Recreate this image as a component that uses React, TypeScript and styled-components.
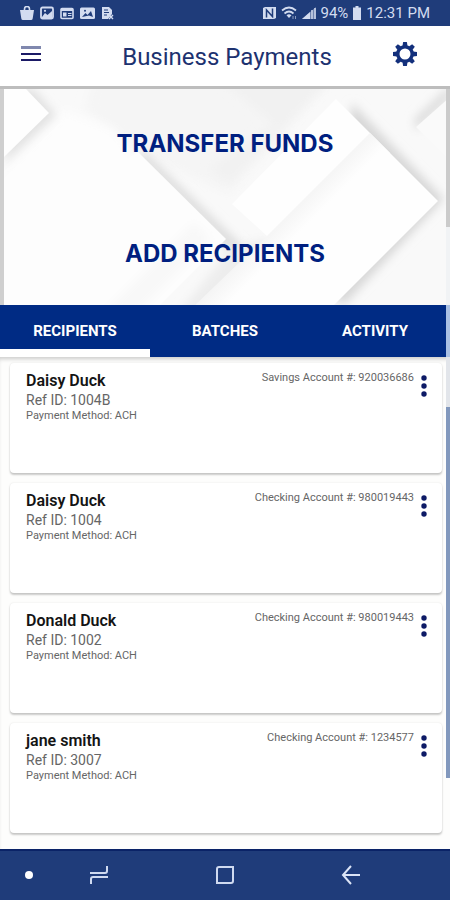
import React, { useState } from "react";
import styled, { createGlobalStyle } from "styled-components";

const GlobalStyle = createGlobalStyle`
  * { box-sizing: border-box; }
  body {
    margin: 0;
    background: #fdfdfc;
    font-family: Roboto, "Liberation Sans", sans-serif;
  }
  button {
    font: inherit;
    color: inherit;
    background: none;
    border: 0;
    padding: 0;
    cursor: pointer;
  }
  h1, h2, p { margin: 0; }
  svg { display: block; }
`;

const Screen = styled.div`
  display: flex;
  flex-direction: column;
  min-height: 100vh;
`;

const StatusBar = styled.div`
  display: flex;
  align-items: center;
  justify-content: space-between;
  height: 26px;
  padding: 0 20px;
  background: #1f3c7a;
  color: #d3dcf0;
  font-size: 15px;
  line-height: 26px;
`;

const StatusGroup = styled.div<{ $gap: number }>`
  display: flex;
  align-items: center;
  gap: ${(p) => p.$gap}px;
`;

const Header = styled.header`
  display: grid;
  grid-template-columns: 26px 1fr 26px;
  align-items: center;
  height: 63px;
  padding: 0 32px 4px 20px;
  background: #fff;
  border-bottom: 3px solid #bdbdbd;
`;

const Title = styled.h1`
  padding: 6px 0 0 16px;
  text-align: center;
  font-size: 24px;
  line-height: 32px;
  font-weight: 400;
  color: #1d3270;
`;

const IconButton = styled.button`
  display: grid;
  place-items: center;
  justify-self: center;
  flex: none;
`;

const MainMenuButton = styled(IconButton)`
  justify-self: start;
`;

const Body = styled.div`
  position: relative;
  flex: 1;
`;

const Rail = styled.div`
  position: absolute;
  top: 0;
  right: 0;
  bottom: 0;
  display: flex;
  flex-direction: column;
  width: 4px;
`;

const RailPart = styled.div<{ $grow: number; $color: string }>`
  flex: ${(p) => p.$grow} 0 0;
  background: ${(p) => p.$color};
`;

const Hero = styled.section`
  display: grid;
  border-left: 4px solid #cfcfcf;
  background: #fafafa;
  overflow: hidden;
`;

const HeroArt = styled.svg`
  grid-area: 1 / 1;
  width: 100%;
  height: 100%;
`;

const HeroActions = styled.div`
  grid-area: 1 / 1;
  z-index: 1;
  display: flex;
  flex-direction: column;
  align-items: center;
  gap: 78px;
  padding: 39px 4px 35px 0;
`;

const HeroButton = styled.button`
  font-family: Inter, Roboto, sans-serif;
  font-size: 24px;
  line-height: 32px;
  font-weight: 700;
  color: #001f80;
`;

const Tabs = styled.div`
  display: grid;
  grid-template-columns: repeat(3, 1fr);
  background: #002b84;
`;

const Tab = styled.button<{ $active: boolean }>`
  height: 52px;
  box-shadow: inset 0 ${(p) => (p.$active ? "-8px" : "0")} 0 #fff;
  font-size: 15px;
  line-height: 52px;
  font-weight: 700;
  color: #fff;
`;

const List = styled.ul`
  display: flex;
  flex-direction: column;
  gap: 10px;
  margin: 0;
  padding: 6px 8px 16px 10px;
  list-style: none;
  box-shadow: inset 0 4px 4px -2px rgba(0, 0, 0, 0.2);
`;

const Card = styled.li`
  display: flex;
  justify-content: space-between;
  min-height: 110px;
  padding: 8px 15px 8px 16px;
  background: #fff;
  border-radius: 4px;
  box-shadow: 0 2px 2px rgba(0, 0, 0, 0.2), 0 0 2px rgba(0, 0, 0, 0.1);
`;

const Name = styled.h2`
  font-size: 16px;
  line-height: 20px;
  font-weight: 600;
  color: #141414;
`;

const RefId = styled.p`
  font-size: 14px;
  line-height: 18px;
  color: #666;
`;

const Small = styled.p`
  font-size: 11px;
  line-height: 14px;
  color: #666;
`;

const CardSide = styled.div`
  display: flex;
  align-items: flex-start;
  gap: 7px;
`;

const MenuButton = styled(IconButton)`
  width: 6px;
  height: 22px;
  margin-top: 4px;
`;

const NavBar = styled.nav`
  display: grid;
  grid-template-columns: 36px 1fr 1fr 1fr 36px;
  align-items: center;
  height: 51px;
  padding-bottom: 2px;
  background: #1f3c7a;
  border-top: 2px solid #0a2367;
`;

const NavDot = styled(IconButton)`
  justify-self: end;
  margin-right: 2px;
`;

const recipients = [
  { name: "Daisy Duck", ref: "1004B", account: "Savings Account #: 920036686" },
  { name: "Daisy Duck", ref: "1004", account: "Checking Account #: 980019443" },
  { name: "Donald Duck", ref: "1002", account: "Checking Account #: 980019443" },
  { name: "jane smith", ref: "3007", account: "Checking Account #: 1234577" },
];

const tabNames = ["RECIPIENTS", "BATCHES", "ACTIVITY"];

const light = "#d3dcf0";
const bar = "#1f3c7a";

function NoticeIcons() {
  return (
    <StatusGroup $gap={6}>
      <svg width="14" height="14" viewBox="0 0 14 14">
        <path d="M0 4h14l-1.300 8.500q-.2 1.500-1.700 1.500H3q-1.500 0-1.700-1.500z" fill={light} />
        <path d="M4.500 5V3a2.500 2.500 0 0 1 5 0v2" fill="none" stroke={light} strokeWidth="1.600" />
      </svg>
      <svg width="14" height="14" viewBox="0 0 14 14">
        <rect x="1" y="1.500" width="12" height="11" rx="1.500" fill="none" stroke={light} strokeWidth="1.800" />
        <path d="M2 11l3-4 2.500 2L12 5v7H2z" fill={light} />
        <circle cx="5" cy="4.800" r="1.100" fill={light} />
      </svg>
      <svg width="14" height="14" viewBox="0 0 14 14">
        <rect x="1" y="2.500" width="12" height="10" rx="1" fill="none" stroke={light} strokeWidth="1.600" />
        <path d="M1 2h12v3H1zM3 6.500h3.500v4H3z" fill={light} />
        <path d="M8 7.500h3.500M8 9.500h3.500" stroke={light} />
      </svg>
      <svg width="15" height="14" viewBox="0 0 15 14">
        <rect x="0" y="1.500" width="15" height="11.500" rx="1.500" fill={light} />
        <path d="M2 11l3.500-4 2 2L11 5l2 6-4-1.500z" fill={bar} />
        <circle cx="5" cy="4.800" r="1" fill={bar} />
      </svg>
      <svg width="13" height="14" viewBox="0 0 13 14">
        <path d="M1 1h7l3 3v4L7 13H1z" fill={light} />
        <path d="M3 4h4M3 6.500h5M3 9h3" stroke={bar} />
        <path d="M8 9l4 4M12 9l-4 4" stroke={light} strokeWidth="1.400" />
      </svg>
    </StatusGroup>
  );
}

function SystemIcons() {
  return (
    <StatusGroup $gap={5}>
      <svg width="13" height="14" viewBox="0 0 13 14">
        <path d="M0 2l2-1h11v11l-2 1H0z" fill={light} />
        <path d="M3.500 11.500V4l6 6.500V2.500" fill="none" stroke={bar} strokeWidth="1.500" />
      </svg>
      <svg width="16" height="14" viewBox="0 0 16 14">
        <g fill="none" stroke={light} strokeWidth="1.700">
          <path d="M1 4.500q7-6 14 0" />
          <path d="M3.500 7.500q4.500-4 9 0" />
        </g>
        <path d="M5.500 9.300q2.500-2 5 0L8 12z" fill={light} />
        <path d="M12 10v3M14.500 10v3" stroke={light} strokeWidth="1" opacity=".6" />
      </svg>
      <svg width="14" height="14" viewBox="0 0 14 14">
        <path d="M0 13L14 1v12z" fill={light} opacity=".45" />
        <path d="M0 13l8-7v7z" fill={light} />
        <path d="M10 4v9M13 2v11" stroke={light} strokeWidth="1.400" />
      </svg>
      <span>94%</span>
      <svg width="8" height="14" viewBox="0 0 8 14">
        <path d="M2.500 0h3v1.500H8V14H0V1.500h2.500z" fill={light} />
      </svg>
      <span>12:31 PM</span>
    </StatusGroup>
  );
}

function Gear() {
  const teeth = [0, 45, 90, 135, 180, 225, 270, 315];
  return (
    <svg width="26" height="26" viewBox="-13 -13 26 26">
      <circle r="7.200" fill="none" stroke="#13307c" strokeWidth="3.400" />
      {teeth.map((a) => (
        <path key={a} d="M-2.500-8L-1.900-12h3.800L2.500-8z" fill="#13307c" transform={`rotate(${a})`} />
      ))}
    </svg>
  );
}

function Backdrop() {
  const soft = "url(#soft)";
  return (
    <HeroArt viewBox="0 0 446 216" preserveAspectRatio="none" aria-hidden="true">
      <defs>
        <filter id="soft" filterUnits="userSpaceOnUse" x="-80" y="-80" width="620" height="400">
          <feGaussianBlur stdDeviation="5" />
        </filter>
        <linearGradient id="fold" gradientUnits="userSpaceOnUse" x1="310" y1="99" x2="325" y2="114">
          <stop offset="0" stopColor="#f5f5f5" />
          <stop offset="1" stopColor="#fefefe" />
        </linearGradient>
      </defs>
      <rect width="446" height="216" fill="#f9f9f9" />
      <path d="M90 -10H330L225 105 133 62 80 20z" fill="#f5f5f5" filter={soft} />
      <path d="M215 -10H325L225 95 205 80 270 35z" fill="#f1f1f1" filter={soft} />
      <path d="M140 62L240 158 228 165 130 72z" fill="#dedede" filter={soft} />
      <path d="M-40 120L60 20 110 40 133 70 212 150 156 206 70 300-60 260z" fill="#fdfdfd" filter={soft} />
      <path d="M133 62L222 150 156 216H60L100 95z" fill="#fdfdfd" />
      <path d="M98 226L190 134 206 150 130 226z" fill="#f8f8f8" filter={soft} />
      <path d="M228 158L176 222H310L262 150z" fill="#ededed" filter={soft} />
      <path d="M0 74L52 26 30 0 10 0z" fill="#e2e2e2" filter={soft} />
      <path d="M0 0h22l23 24L0 68z" fill="#fefefe" />
      <path d="M348 14L440 110 340 216 326 206z" fill="#d8d8d8" filter={soft} />
      <path d="M332 10L434 112 330 216H210L263 147 228 115z" fill="#fefefe" />
      <path d="M366 44L386 64 229 221H186L263 147z" fill="url(#fold)" />
      <path d="M410 30L446 -4V10L412 42z" fill="#dedede" filter={soft} />
      <path d="M412 38L446 8V72z" fill="#fafafa" />
    </HeroArt>
  );
}

export default function App() {
  const [tab, setTab] = useState(0);
  return (
    <>
      <GlobalStyle />
      <Screen>
        <StatusBar>
          <NoticeIcons />
          <SystemIcons />
        </StatusBar>
        <Header>
          <MainMenuButton aria-label="Menu">
            <svg width="22" height="16" viewBox="0 0 22 16">
              <path d="M1 1.500h20" stroke="#8088ae" strokeWidth="3" />
              <path d="M1 8h20M1 14h20" stroke="#1b1a66" strokeWidth="2" />
            </svg>
          </MainMenuButton>
          <Title>Business Payments</Title>
          <IconButton aria-label="Settings">
            <Gear />
          </IconButton>
        </Header>
        <Body>
          <main>
            <Hero>
              <Backdrop />
              <HeroActions>
                <HeroButton>TRANSFER FUNDS</HeroButton>
                <HeroButton>ADD RECIPIENTS</HeroButton>
              </HeroActions>
            </Hero>
            <Tabs role="tablist">
              {tabNames.map((label, i) => (
                <Tab key={label} role="tab" aria-selected={tab === i} $active={tab === i} onClick={() => setTab(i)}>
                  {label}
                </Tab>
              ))}
            </Tabs>
            <List>
              {recipients.map((r) => (
                <Card key={r.ref}>
                  <div>
                    <Name>{r.name}</Name>
                    <RefId>Ref ID: {r.ref}</RefId>
                    <Small>Payment Method: ACH</Small>
                  </div>
                  <CardSide>
                    <Small>{r.account}</Small>
                    <MenuButton aria-label={`Options for ${r.name}`}>
                      <svg width="6" height="22" viewBox="0 0 6 22" fill="#0d1a66">
                        <circle cx="3" cy="3" r="2.700" />
                        <circle cx="3" cy="11" r="2.700" />
                        <circle cx="3" cy="19" r="2.700" />
                      </svg>
                    </MenuButton>
                  </CardSide>
                </Card>
              ))}
            </List>
          </main>
          <Rail aria-hidden="true">
            <RailPart $grow={138} $color="#cbcbcb" />
            <RailPart $grow={78} $color="#f1f3f5" />
            <RailPart $grow={52} $color="#a9c0e4" />
            <RailPart $grow={50} $color="#e2e5ea" />
            <RailPart $grow={371} $color="#8298bd" />
            <RailPart $grow={71} $color="#fdfdfc" />
          </Rail>
        </Body>
        <NavBar>
          <NavDot aria-label="Show or hide bar">
            <svg width="10" height="10" viewBox="0 0 10 10">
              <circle cx="5" cy="5" r="4" fill="#fff" />
            </svg>
          </NavDot>
          <IconButton aria-label="Recent apps">
            <svg width="20" height="20" viewBox="0 0 20 20" fill="none" stroke="#cfdaf0" strokeWidth="2">
              <path d="M1 8h15q2 0 2-2V1" />
              <path d="M19 12H4q-2 0-2 2v5" />
            </svg>
          </IconButton>
          <IconButton aria-label="Home">
            <svg width="20" height="20" viewBox="0 0 20 20" fill="none" stroke="#cfdaf0" strokeWidth="2">
              <path d="M2 18V4q0-2 2-2h14v14q0 2-2 2z" />
            </svg>
          </IconButton>
          <IconButton aria-label="Back">
            <svg width="20" height="20" viewBox="0 0 20 20" fill="none" stroke="#dbe4f6" strokeWidth="2">
              <path d="M10 1L2 10l8 9M2 10h17" />
            </svg>
          </IconButton>
        </NavBar>
      </Screen>
    </>
  );
}
